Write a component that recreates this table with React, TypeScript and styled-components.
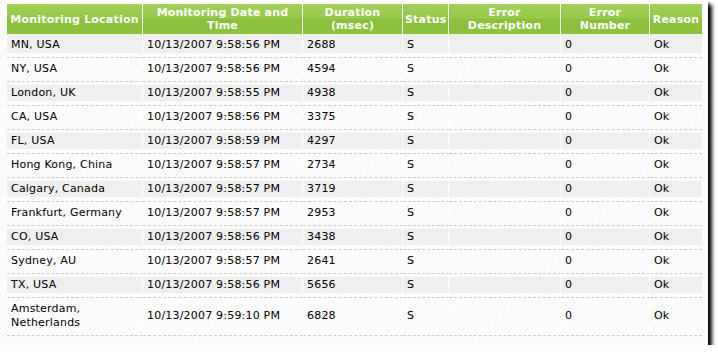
import React from "react";
import styled, { createGlobalStyle } from "styled-components";

const GlobalStyle = createGlobalStyle`
  html, body {
    margin: 0;
    padding: 0;
    background: #ffffff;
  }
`;

const columns = [
  { label: ["Monitoring Location"], width: 136 },
  { label: ["Monitoring Date and", "Time"], width: 160 },
  { label: ["Duration", "(msec)"], width: 100 },
  { label: ["Status"], width: 46 },
  { label: ["Error", "Description"], width: 112 },
  { label: ["Error", "Number"], width: 89 },
  { label: ["Reason"], width: 52 },
];

const rows = [
  ["MN, USA", "10/13/2007 9:58:56 PM", "2688"],
  ["NY, USA", "10/13/2007 9:58:56 PM", "4594"],
  ["London, UK", "10/13/2007 9:58:55 PM", "4938"],
  ["CA, USA", "10/13/2007 9:58:56 PM", "3375"],
  ["FL, USA", "10/13/2007 9:58:59 PM", "4297"],
  ["Hong Kong, China", "10/13/2007 9:58:57 PM", "2734"],
  ["Calgary, Canada", "10/13/2007 9:58:57 PM", "3719"],
  ["Frankfurt, Germany", "10/13/2007 9:58:57 PM", "2953"],
  ["CO, USA", "10/13/2007 9:58:56 PM", "3438"],
  ["Sydney, AU", "10/13/2007 9:58:57 PM", "2641"],
  ["TX, USA", "10/13/2007 9:58:56 PM", "5656"],
  ["Amsterdam, Netherlands", "10/13/2007 9:59:10 PM", "6828"],
];

const Panel = styled.div`
  width: 708px;
  height: 345px;
  box-sizing: border-box;
  padding: 4px 6px 0 7px;
  background-color: #ffffff;
  background-image: repeating-linear-gradient(
    135deg,
    #ffffff 0px,
    #ffffff 2px,
    #f6f6f6 2px,
    #f6f6f6 3px
  );
  box-shadow: 4px 5px 4px rgba(0, 0, 0, 0.95), 2px 3px 2px rgba(0, 0, 0, 0.5);
  font-family: "DejaVu Sans", Verdana, sans-serif;
`;

const Table = styled.table`
  width: 695px;
  table-layout: fixed;
  border-collapse: separate;
  border-spacing: 0;
`;

const HeadCell = styled.th`
  height: 30px;
  box-sizing: border-box;
  padding: 2px 2px;
  color: #ffffff;
  font-size: 11px;
  font-weight: bold;
  line-height: 13px;
  letter-spacing: 0.2px;
  text-align: center;
  vertical-align: middle;
  white-space: nowrap;
  background: linear-gradient(
    #a0d05a 0%,
    #96c84b 48%,
    #8bc03c 52%,
    #8cc23f 100%
  );
  border-right: 1px solid #ffffff;

  &:last-child {
    border-right: none;
  }
`;

const Row = styled.tr<{ $shaded: boolean }>`
  td {
    background: ${(p) =>
      p.$shaded
        ? "linear-gradient(#efefef, #efefef) 0 3px / 100% calc(100% - 7px) no-repeat"
        : "transparent"};
  }

  &:first-child td {
    background-position: 0 0;
    background-size: 100% calc(100% - 4px);
  }
`;

const Cell = styled.td`
  padding: 4px 4px 5px;
  color: #000000;
  font-size: 11px;
  line-height: 14px;
  letter-spacing: 0.2px;
  text-align: left;
  vertical-align: middle;
  border-bottom: 1px dashed #cccccc;
  border-right: 1px dashed #ffffff;

  &:last-child {
    border-right: none;
  }
`;

export default function App() {
  return (
    <>
      <GlobalStyle />
      <Panel>
        <Table>
          <colgroup>
            {columns.map((c, i) => (
              <col key={i} style={{ width: c.width }} />
            ))}
          </colgroup>
          <thead>
            <tr>
              {columns.map((c, i) => (
                <HeadCell key={i}>
                  {c.label.map((line, j) => (
                    <React.Fragment key={j}>
                      {j > 0 && <br />}
                      {line}
                    </React.Fragment>
                  ))}
                </HeadCell>
              ))}
            </tr>
          </thead>
          <tbody>
            {rows.map((r, i) => (
              <Row key={i} $shaded={i % 2 === 0}>
                <Cell>{r[0]}</Cell>
                <Cell>{r[1]}</Cell>
                <Cell>{r[2]}</Cell>
                <Cell>S</Cell>
                <Cell></Cell>
                <Cell>0</Cell>
                <Cell>Ok</Cell>
              </Row>
            ))}
          </tbody>
        </Table>
      </Panel>
    </>
  );
}
